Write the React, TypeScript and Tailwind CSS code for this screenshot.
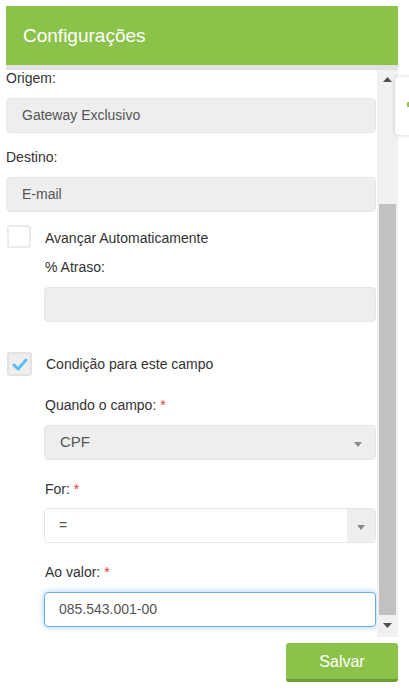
import React from "react";

function Arrow() {
  return (
    <svg width="8" height="5" viewBox="0 0 8 5" className="block">
      <path d="M0 0 L8 0 L4 5 Z" fill="#8a8a8a" />
    </svg>
  );
}

function Req({ children }: { children: React.ReactNode }) {
  return (
    <div className="leading-[16px] text-[#333]">
      {children} <span className="text-[#e53935]">*</span>
    </div>
  );
}

export default function App() {
  return (
    <div className="relative w-[409px] h-[697px] bg-white pt-[6px] pl-[6px] pr-[11px] font-['Liberation_Sans',Arial,sans-serif] text-[14px] text-[#333]">
      <div className="h-[59px] bg-[#8bc34a] flex items-center pl-[17px] text-white text-[19px] leading-none">
        Configurações
      </div>
      <div className="h-[5px] bg-[#e2e2e2]" />
      <div className="flex h-[567px]">
        <div className="flex-1 overflow-hidden pr-[1px]">
          <div className="leading-[16px]">Origem:</div>
          <div className="mt-[12px] h-[35px] rounded-[4px] bg-[#eeeeee] border border-[#e4e7ea] flex items-center pl-[15px] text-[#555]">
            Gateway Exclusivo
          </div>
          <div className="leading-[16px] mt-[16px]">Destino:</div>
          <div className="mt-[12px] h-[35px] rounded-[4px] bg-[#eeeeee] border border-[#e4e7ea] flex items-center pl-[15px] text-[#555]">
            E-mail
          </div>

          <div className="mt-[13px] flex items-start">
            <div className="ml-[1px] w-[24px] h-[23px] rounded-[3px] border-2 border-[#e9ecef] bg-white" />
            <div className="ml-[14px] mt-[5px] leading-[16px]">Avançar Automaticamente</div>
          </div>
          <div className="ml-[38px]">
            <div className="leading-[16px] mt-[11px] pl-[1px]">% Atraso:</div>
            <div className="mt-[12px] h-[35px] rounded-[4px] bg-[#eeeeee] border border-[#e4e7ea]" />
          </div>

          <div className="mt-[30px] flex items-start">
            <div className="ml-[1px] w-[25px] h-[24px] rounded-[3px] border-2 border-[#e2e2e2] bg-[#eeeeee] flex items-center justify-center">
              <svg width="16" height="13" viewBox="0 0 16 13">
                <path d="M2 7 L6 11 L14 2" fill="none" stroke="#5bbdf0" strokeWidth="3" strokeLinecap="round" strokeLinejoin="round" />
              </svg>
            </div>
            <div className="ml-[14px] mt-[4px] leading-[16px]">Condição para este campo</div>
          </div>

          <div className="ml-[38px]">
            <div className="mt-[21px] pl-[1px]">
              <Req>Quando o campo:</Req>
            </div>
            <div className="mt-[12px] h-[35px] rounded-[4px] bg-[#eeeeee] border border-[#e4e7ea] flex items-center pl-[15px] pr-[13px] text-[#555] text-[15px]">
              <span className="flex-1">CPF</span>
              <span className="mt-[3px]"><Arrow /></span>
            </div>

            <div className="mt-[21px] pl-[1px]">
              <Req>For:</Req>
            </div>
            <div className="mt-[11px] h-[35px] rounded-[4px] bg-white border border-[#e4e7ea] flex text-[#555] overflow-hidden">
              <span className="flex-1 flex items-center pl-[14px]">=</span>
              <span className="w-[28px] bg-[#eeeeee] flex items-center justify-center pt-[3px]">
                <Arrow />
              </span>
            </div>

            <div className="mt-[21px] pl-[1px]">
              <Req>Ao valor:</Req>
            </div>
            <div className="mt-[12px] h-[35px] rounded-[4px] bg-white border-[1.5px] border-[#66afe9] shadow-[0_0_6px_rgba(102,175,233,0.6)] flex items-center pl-[14px] text-[#555]">
              085.543.001-00
            </div>
          </div>
        </div>

        <div className="w-[21px] bg-[#f1f1f1] flex flex-col items-center">
          <div className="h-[17px] flex items-center justify-center pt-[1px]">
            <svg width="9" height="5" viewBox="0 0 9 5"><path d="M0 5 L9 5 L4.5 0 Z" fill="#505050" /></svg>
          </div>
          <div className="h-[117px]" />
          <div className="w-[17px] h-[411px] bg-[#c1c1c1]" />
          <div className="flex-1 flex items-center justify-center pb-[2px]">
            <svg width="9" height="5" viewBox="0 0 9 5"><path d="M0 0 L9 0 L4.5 5 Z" fill="#505050" /></svg>
          </div>
        </div>
      </div>

      <div className="flex justify-end mt-[6px]">
        <button className="w-[112px] h-[39px] rounded-[3px] bg-[#8bc34a] border-b-[3px] border-[#6b9e36] text-white text-[16px] pt-[2px]">
          Salvar
        </button>
      </div>

      <div className="absolute left-[395px] top-[77px] w-[20px] h-[58px] bg-white rounded-l-[4px] shadow-[0_0_4px_rgba(0,0,0,0.18)]">
        <div className="absolute left-[12px] top-[25px] w-[3px] h-[5px] bg-[#8bc34a] rounded-[1px]" />
      </div>
    </div>
  );
}
